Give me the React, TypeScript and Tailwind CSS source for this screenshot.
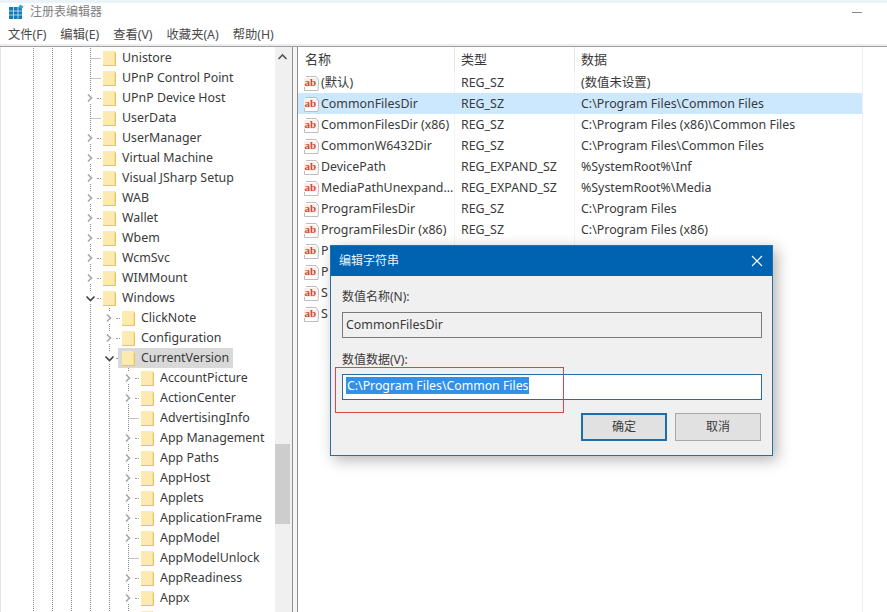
import React from "react";

const FONT = "[font-family:'Noto_Sans','Noto_Sans_CJK_SC',sans-serif]";

type Node = { label: string; level: number; kind: "leaf" | "closed" | "open"; sel?: boolean };

const tree: Node[] = [
  { label: "Unistore", level: 0, kind: "leaf" },
  { label: "UPnP Control Point", level: 0, kind: "leaf" },
  { label: "UPnP Device Host", level: 0, kind: "closed" },
  { label: "UserData", level: 0, kind: "leaf" },
  { label: "UserManager", level: 0, kind: "closed" },
  { label: "Virtual Machine", level: 0, kind: "closed" },
  { label: "Visual JSharp Setup", level: 0, kind: "closed" },
  { label: "WAB", level: 0, kind: "closed" },
  { label: "Wallet", level: 0, kind: "closed" },
  { label: "Wbem", level: 0, kind: "closed" },
  { label: "WcmSvc", level: 0, kind: "closed" },
  { label: "WIMMount", level: 0, kind: "closed" },
  { label: "Windows", level: 0, kind: "open" },
  { label: "ClickNote", level: 1, kind: "closed" },
  { label: "Configuration", level: 1, kind: "closed" },
  { label: "CurrentVersion", level: 1, kind: "open", sel: true },
  { label: "AccountPicture", level: 2, kind: "closed" },
  { label: "ActionCenter", level: 2, kind: "closed" },
  { label: "AdvertisingInfo", level: 2, kind: "leaf" },
  { label: "App Management", level: 2, kind: "closed" },
  { label: "App Paths", level: 2, kind: "closed" },
  { label: "AppHost", level: 2, kind: "closed" },
  { label: "Applets", level: 2, kind: "closed" },
  { label: "ApplicationFrame", level: 2, kind: "closed" },
  { label: "AppModel", level: 2, kind: "closed" },
  { label: "AppModelUnlock", level: 2, kind: "leaf" },
  { label: "AppReadiness", level: 2, kind: "closed" },
  { label: "Appx", level: 2, kind: "closed" },
  { label: "", level: 2, kind: "closed" },
];

const values = [
  ["(默认)", "REG_SZ", "(数值未设置)"],
  ["CommonFilesDir", "REG_SZ", "C:\\Program Files\\Common Files"],
  ["CommonFilesDir (x86)", "REG_SZ", "C:\\Program Files (x86)\\Common Files"],
  ["CommonW6432Dir", "REG_SZ", "C:\\Program Files\\Common Files"],
  ["DevicePath", "REG_EXPAND_SZ", "%SystemRoot%\\Inf"],
  ["MediaPathUnexpand...", "REG_EXPAND_SZ", "%SystemRoot%\\Media"],
  ["ProgramFilesDir", "REG_SZ", "C:\\Program Files"],
  ["ProgramFilesDir (x86)", "REG_SZ", "C:\\Program Files (x86)"],
  ["P", "", ""],
  ["P", "", ""],
  ["S", "", ""],
  ["S", "", ""],
];

function Guide() {
  return (
    <svg width="19" height="20" className="shrink-0">
      <line x1="6.5" y1="0" x2="6.5" y2="20" stroke="#8a8a8a" strokeDasharray="1 1" />
    </svg>
  );
}

function Connector({ kind }: { kind: Node["kind"] }) {
  return (
    <svg width="19" height="20" className="shrink-0">
      <line x1="6.5" y1="0" x2="6.5" y2="20" stroke="#8a8a8a" strokeDasharray="1 1" />
      {kind === "leaf" ? (
        <line x1="6.5" y1="10.5" x2="17" y2="10.5" stroke="#8a8a8a" strokeDasharray="1 1" />
      ) : (
        <>
          <rect x="1" y="4" width="11" height="12" fill="#fff" />
          <line x1="13" y1="10.5" x2="17" y2="10.5" stroke="#9a9a9a" strokeDasharray="2 1" />
        </>
      )}
      {kind === "closed" && <path d="M4 6.5 L7.5 10 L4 13.5" fill="none" stroke="#a6a6a6" strokeWidth="1.6" />}
      {kind === "open" && <path d="M2.5 8.5 L6.5 12.5 L10.5 8.5" fill="none" stroke="#404040" strokeWidth="1.6" />}
    </svg>
  );
}

function Folder() {
  return (
    <svg width="14" height="17" viewBox="0 0 14 17" className="shrink-0">
      <path d="M0 1 H12 V2 H13 V16 H0 Z" fill="#fbe08c" />
      <path d="M0 1 H11 V15 H0 Z" fill="#fdeab0" />
      <path d="M12.5 3 V15.5 H0" fill="none" stroke="#e6c365" />
    </svg>
  );
}

function TreeRow({ n }: { n: Node }) {
  const guides = Array.from({ length: n.level + 3 });
  const text = (
    <>
      <Folder />
      <span className="ml-[5px] whitespace-nowrap">{n.label}</span>
    </>
  );
  return (
    <div className="flex h-5 items-center pl-[26px]">
      {guides.map((_, i) => (
        <Guide key={i} />
      ))}
      <Connector kind={n.kind} />
      {n.sel ? (
        <div className="-ml-[4px] flex h-5 items-center bg-[#d9d9d9] pl-[4px] pr-[4px]">{text}</div>
      ) : (
        text
      )}
    </div>
  );
}

function AbIcon() {
  return (
    <svg width="17" height="17" viewBox="0 0 17 17" className="shrink-0">
      <path d="M1.5 12 V15.5 H15 Q15.5 10 15.5 5 L13 1.5 H3" fill="#fff" stroke="#bdbdbd" />
      <rect x="1" y="3" width="13" height="9" fill="#fdf0ec" />
      <text x="1.5" y="10.5" fontSize="11" fontWeight="700" fill="#cf4a30" fontFamily="'Liberation Serif',serif">
        ab
      </text>
    </svg>
  );
}

export default function App() {
  return (
    <div className={`relative flex h-[612px] w-[887px] flex-col overflow-hidden bg-white text-[12.4px] text-[#3a3a3a] ${FONT}`}>
      <div className="h-[3px] shrink-0 bg-[#e9f3f8]" />
      <div className="flex h-[18px] shrink-0 items-center pl-[8px] pr-[25px]">
        <svg width="16" height="16" viewBox="0 0 16 16" className="shrink-0">
          <rect x="1" y="3" width="13" height="12" fill="#1579b8" />
          <path d="M5.5 3 V15 M10 3 V15 M1 7 H14 M1 11 H14" stroke="#cfe6f4" strokeWidth="0.8" />
          <path d="M12 0.5 L15.5 2.5 L13.5 5.5 L10.5 3 Z" fill="#2aa8d8" />
        </svg>
        <span className="ml-[6px] text-[12px] text-[#808080]">注册表编辑器</span>
        <div className="ml-auto h-px w-[10px] bg-[#8a8a8a]" />
      </div>
      <div className="flex h-[23px] shrink-0 items-center gap-[14px] pl-[8px] pt-[6px] text-[12.3px] text-[#4a4a4a]">
        <span>文件(F)</span>
        <span>编辑(E)</span>
        <span>查看(V)</span>
        <span>收藏夹(A)</span>
        <span>帮助(H)</span>
      </div>
      <div className="h-[2px] shrink-0 bg-[#ededed]" />
      <div className="flex min-h-0 flex-1 border-t border-[#a0a0a0]">
        <div className="relative w-[293px] shrink-0 overflow-hidden border-x border-l-[#e3e3e3] border-r-[#8f8f8f]">
          <div className="flex flex-col pt-px">
            {tree.map((n, i) => (
              <TreeRow key={i} n={n} />
            ))}
          </div>
          <div className="absolute bottom-0 right-0 top-0 flex w-[17px] flex-col bg-[#f0f0f0]">
            <svg width="15" height="20" className="shrink-0">
              <path d="M3.5 12 L7.5 8 L11.5 12" fill="none" stroke="#555" strokeWidth="1.6" />
            </svg>
            <div className="mt-[377px] h-[80px] w-[15px] bg-[#cdcdcd]" />
          </div>
        </div>
        <div className="w-[4px] shrink-0 bg-[#f5f5f5]" />
        <div className="flex min-w-0 flex-1 border-l border-[#8f8f8f]">
          <div className="flex w-[565px] shrink-0 flex-col border-r border-[#eeeeee]">
            <div className="flex h-[25px] shrink-0 items-center text-[13px]">
              <div className="flex h-full w-[157px] items-center border-r border-[#e5e5e5] pl-[7px]">名称</div>
              <div className="flex h-full w-[120px] items-center border-r border-[#e5e5e5] pl-[6px]">类型</div>
              <div className="flex h-full flex-1 items-center pl-[6px]">数据</div>
            </div>
            {values.map(([name, type, data], i) => (
              <div key={i} className={`flex h-[21px] shrink-0 items-center ${i === 1 ? "bg-[#cce8ff]" : ""}`}>
                <div className={`flex h-full w-[157px] items-center pl-[5px] pt-[2px] ${i === 1 ? "" : "border-r border-[#f4f4f4]"}`}>
                  <AbIcon />
                  <span className="whitespace-nowrap pl-px">{name}</span>
                </div>
                <div className={`flex h-full w-[120px] items-center pl-[6px] pt-[2px] ${i === 1 ? "" : "border-r border-[#f4f4f4]"}`}>{type}</div>
                <div className="flex h-full flex-1 items-center pl-[6px] pt-[2px]">{data}</div>
              </div>
            ))}
          </div>
        </div>
      </div>

      {/* Edit-string dialog */}
      <div className="absolute left-[330px] top-[245px] flex h-[211px] w-[443px] flex-col border border-[#2a6f9f] bg-[#f0f0f0] shadow-[4px_4px_14px_rgba(0,0,0,0.3)]">
        <div className="flex h-[30px] shrink-0 items-center justify-between bg-[#0063b1] pl-[8px] pr-[9px] text-[12px] text-[#e8f2fa]">
          <span>编辑字符串</span>
          <svg width="12" height="12" viewBox="0 0 12 12">
            <path d="M1 1 L11 11 M11 1 L1 11" stroke="#fff" strokeWidth="1.1" />
          </svg>
        </div>
        <div className="flex flex-1 flex-col px-[11px] pt-[12px]">
          <div className="h-[18px] text-[12px] leading-[18px]">数值名称(N):</div>
          <div className="mt-[6px] flex h-[26px] w-[420px] items-center border border-[#7a7a7a] pl-[3px]">CommonFilesDir</div>
          <div className="mt-[13px] h-[18px] text-[12px] leading-[18px]">数值数据(V):</div>
          <div className="mt-[5px] flex h-[26px] w-[420px] items-start border border-[#2a6a9e] bg-white pl-[3px] pt-[2px]">
            <span className="bg-[#3390e8] px-px text-[12.3px] leading-[17px] text-white">C:\Program Files\Common Files</span>
          </div>
          <div className="mt-[13px] flex justify-end gap-[8px]">
            <div className="flex h-[28px] w-[86px] items-center justify-center border-2 border-[#1f6ea8] bg-[#e1e1e1] text-[12px]">确定</div>
            <div className="flex h-[28px] w-[86px] items-center justify-center border border-[#a8a8a8] bg-[#e1e1e1] text-[12px]">取消</div>
          </div>
        </div>
      </div>

      {/* Red annotation rectangle */}
      <div className="absolute left-[335px] top-[367px] h-[46px] w-[229px] border border-[#d8474c]" />
    </div>
  );
}
